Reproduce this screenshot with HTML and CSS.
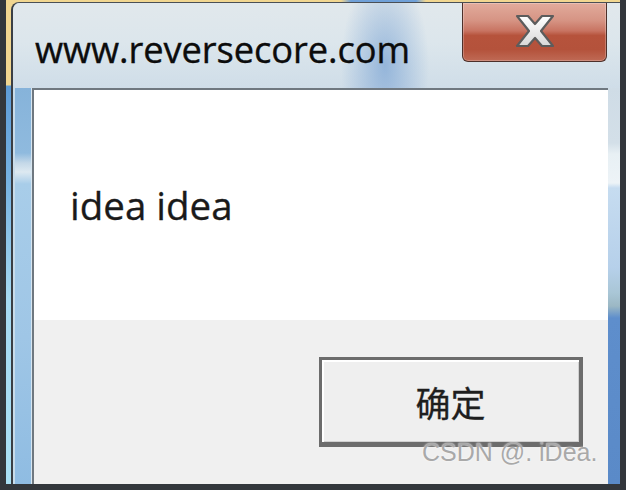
FILE: index.html
```html
<!DOCTYPE html>
<html lang="zh">
<head>
<meta charset="utf-8">
<title>www.reversecore.com</title>
<link rel="stylesheet" href="styles.css">
</head>
<body>
<div class="screen">
  <div class="window">
    <div class="titlebar">
      <div class="title">www.reversecore.com</div>
      <div class="close">
        <svg width="44" height="36" viewBox="0 0 44 36" aria-hidden="true">
          <defs>
            <linearGradient id="xg" x1="0" y1="0" x2="0" y2="1">
              <stop offset="0" stop-color="#ffffff"/>
              <stop offset="1" stop-color="#d8d8d8"/>
            </linearGradient>
          </defs>
          <polygon points="4,3 15,3 22,11 29,3 40,3 28,18 40,33 29,33 22,25 15,33 4,33 16,18" fill="url(#xg)" stroke="#5c5c5c" stroke-width="2.2" stroke-linejoin="round"/>
        </svg>
      </div>
    </div>
    <div class="body">
      <div class="frame-left"></div>
      <div class="content">
        <div class="message">idea idea</div>
        <div class="actions">
          <div class="ok">确定</div>
        </div>
      </div>
      <div class="frame-right"></div>
    </div>
  </div>
  <div class="watermark">CSDN @. iDea.</div>
</div>
</body>
</html>
```
FILE: styles.css
```css
html, body {
  margin: 0;
  padding: 0;
}
body {
  background: #33373c;
  width: 626px;
  height: 490px;
  overflow: hidden;
}
.screen {
  position: relative;
  box-sizing: border-box;
  width: 614px;
  height: 484px;
  margin-left: 6px;
  padding: 2px 0 0 5px;
  background:
    linear-gradient(to right, rgba(0,0,0,0) 335px, #6fa0d8 345px, #6fa0d8 410px, rgba(0,0,0,0) 420px) top / 100% 2px no-repeat,
    linear-gradient(to bottom, #f1d690 0, #f1d690 85px, #5d9bd6 86px, #76b2e2 180px, #a6daf2 300px, #aae0f4 484px);
}
.window {
  box-sizing: border-box;
  width: 609px;
  height: 482px;
  border-left: 2px solid #3a3f45;
  border-top: 1px solid #4a4f55;
  border-radius: 8px 0 0 0;
  display: flex;
  flex-direction: column;
  background: #d6e2ea;
}
.titlebar {
  height: 85px;
  flex: none;
  display: flex;
  justify-content: space-between;
  align-items: flex-start;
  padding-right: 13px;
  border-radius: 7px 0 0 0;
  background:
    radial-gradient(ellipse 44px 95px at 372px 62px, rgba(95,145,205,0.55), rgba(95,145,205,0) 100%),
    linear-gradient(to bottom, #e1e8ec 0, #dce6ec 40px, #cfdde8 85px);
}
.title {
  font-family: "Open Sans", "Noto Sans", sans-serif;
  font-size: 36.3px;
  line-height: 1;
  color: #0c0c0c;
  padding: 28px 0 0 22px;
  letter-spacing: -0.1px;
  -webkit-text-stroke: 0.35px #0c0c0c;
}
.close {
  box-sizing: border-box;
  width: 145px;
  height: 59px;
  border: 1px solid #4d302a;
  border-top: none;
  border-radius: 0 0 6px 6px;
  background: linear-gradient(to bottom, #e2ab9c 0, #d69484 30%, #c87462 48%, #b6533c 56%, #b4523b 80%, #bf6a55 100%);
  box-shadow: inset 0 0 0 1px rgba(255,255,255,0.25);
  display: flex;
  align-items: center;
  justify-content: center;
}
.close svg {
  display: block;
  margin-top: -2px;
}
.body {
  flex: 1;
  display: flex;
}
.frame-left {
  box-sizing: border-box;
  width: 19px;
  border-left: 2px solid #c8dcea;
  border-right: 1px solid #d8e6f0;
  background: linear-gradient(to bottom, #86b3da 0, #8fbade 65px, #c4d8e8 75px, #dde9f1 84px, #a8cde9 96px, #9fc6e6 250px, #8fbce2 396px);
}
.frame-right {
  width: 12px;
  background: linear-gradient(to bottom, #cfdce6 0, #d3dfe8 55px, #e8f0f4 66px, #edf3f7 95px, #c6dcf0 100px, #b6d0ea 180px, #a9c6d6 205px, #9cb8c4 218px, #5e8ecc 230px, #5a8ac8 396px);
}
.content {
  box-sizing: border-box;
  width: 576px;
  border-top: 2px solid #6f7880;
  border-left: 2px solid #6f7880;
  display: flex;
  flex-direction: column;
}
.message {
  height: 230px;
  background: #ffffff;
  display: flex;
  align-items: center;
  padding-left: 36px;
  font-family: "Open Sans", "Noto Sans", sans-serif;
  font-size: 38.5px;
  color: #1a1a1a;
  -webkit-text-stroke: 0.3px #1a1a1a;
}
.actions {
  flex: 1;
  background: #f0f0f0;
  display: flex;
  justify-content: flex-end;
  align-items: flex-start;
  padding: 37px 25px 0 0;
}
.ok {
  box-sizing: border-box;
  width: 264px;
  height: 90px;
  border: 3px solid #6c6c6c;
  border-bottom-width: 5px;
  border-right-width: 4px;
  box-shadow: inset 2px 2px 0 #ffffff, inset -1px -1px 0 #d0d0d0;
  background: #efefef;
  display: flex;
  align-items: center;
  justify-content: center;
  font-family: "Noto Sans CJK SC", sans-serif;
  font-size: 35px;
  color: #1e1e1e;
  -webkit-text-stroke: 0.3px #1e1e1e;
}
.watermark {
  position: absolute;
  left: 416px;
  top: 438px;
  font-family: "Liberation Sans", Arial, sans-serif;
  font-size: 25px;
  color: #a9a9a9;
  text-shadow: 0 0 2px #ffffff;
}
```
